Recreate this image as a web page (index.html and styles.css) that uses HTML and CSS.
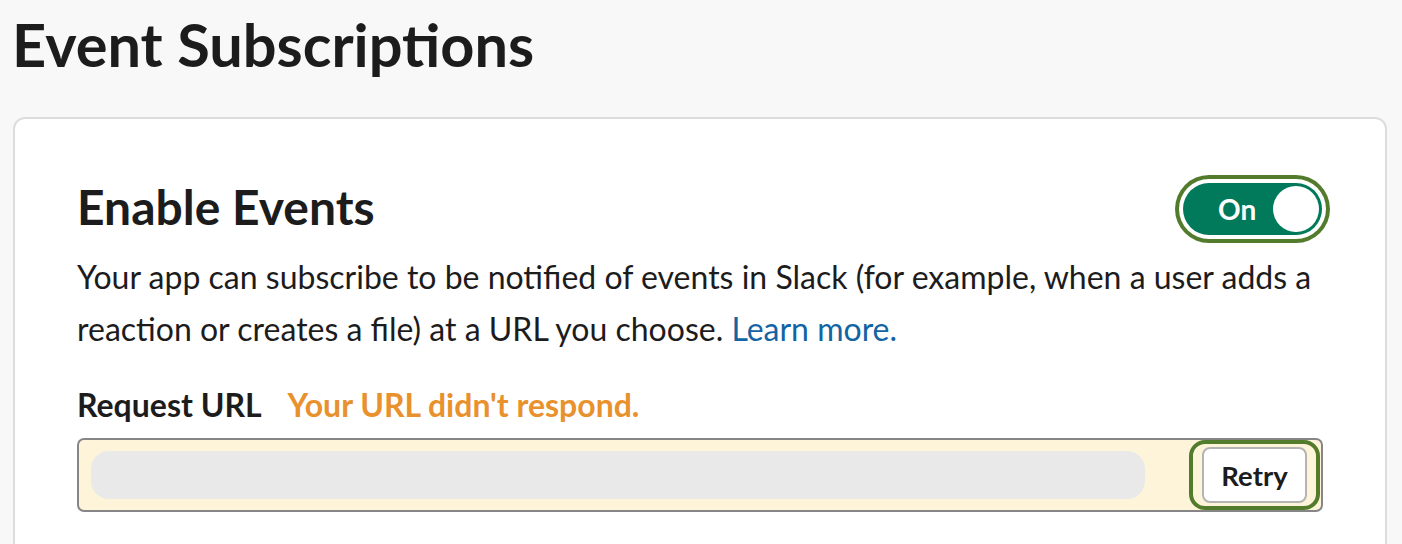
FILE: index.html
```html
<!DOCTYPE html>
<html lang="en">
<head>
<meta charset="utf-8">
<title>Event Subscriptions</title>
<link rel="stylesheet" href="styles.css">
</head>
<body>
<div class="page">
  <h1 class="page-title">Event Subscriptions</h1>
  <section class="card">
    <div class="card-head">
      <h2 class="card-title">Enable Events</h2>
      <div class="toggle" role="switch" aria-checked="true">
        <span class="toggle-label">On</span>
        <span class="toggle-knob"></span>
      </div>
    </div>
    <p class="desc">Your app can subscribe to be notified of events in Slack (for example, when a user adds a reaction or creates a file) at a URL you choose. <a class="link" href="#">Learn more.</a></p>
    <div class="field-label">
      <span class="label">Request URL</span>
      <span class="warn">Your URL didn't respond.</span>
    </div>
    <div class="url-input">
      <div class="url-placeholder"></div>
      <div class="retry-ring">
        <button class="retry">Retry</button>
      </div>
    </div>
  </section>
</div>
</body>
</html>
```

FILE: styles.css
```css
* { box-sizing: border-box; }
html, body {
  margin: 0;
  padding: 0;
  background: #f8f8f8;
  font-family: "Lato", "Noto Sans", sans-serif;
  color: #1d1c1d;
  overflow: hidden;
}
.page {
  padding: 0 15px 0 13px;
}
.page-title {
  margin: 6px 0 34px -1px;
  font-size: 59.5px;
  line-height: 77px;
  font-weight: 700;
}
.card {
  background: #fff;
  border: 2px solid #dddddd;
  border-radius: 12px;
  padding: 64px 62px 80px 62px;
}
.card-head {
  display: flex;
  justify-content: space-between;
  align-items: flex-start;
}
.card-title {
  margin: -2px 0 0 0;
  font-size: 48px;
  line-height: 52px;
  font-weight: 700;
}
.toggle {
  display: flex;
  align-items: center;
  width: 139px;
  height: 52px;
  border-radius: 26px;
  background: #007a5a;
  padding: 0 3px 0 35px;
  gap: 17px;
  margin-right: 1px;
  box-shadow: 0 0 0 4px #fff, 0 0 0 8px #537b2c;
}
.toggle-label {
  color: #fff;
  font-size: 28px;
  font-weight: 700;
  line-height: 1;
}
.toggle-knob {
  width: 46px;
  height: 46px;
  border-radius: 50%;
  background: #fff;
  margin-left: auto;
}
.desc {
  margin: 16px 0 0 0;
  font-size: 32px;
  line-height: 52px;
}
.link {
  color: #1264a3;
  text-decoration: none;
}
.field-label {
  margin-top: 30px;
  font-size: 32px;
  line-height: 40px;
  font-weight: 700;
  display: flex;
}
.warn {
  color: #e8912d;
  margin-left: 26px;
}
.url-input {
  margin-top: 13px;
  display: flex;
  align-items: center;
  height: 74px;
  border: 2px solid #868686;
  border-radius: 7px;
  background: #fef4da;
  padding: 0 1px 0 12px;
}
.url-placeholder {
  flex: 1;
  height: 48px;
  border-radius: 18px;
  background: #e9e9e9;
  margin-right: 44px;
}
.retry-ring {
  border: 4px solid #537b2c;
  border-radius: 16px;
  padding: 3px 9px;
  height: 70px;
  display: flex;
  align-items: center;
}
.retry {
  width: 105px;
  height: 56px;
  background: #fff;
  border: 2px solid #b4b4b4;
  border-radius: 8px;
  font-family: "Lato", "Noto Sans", sans-serif;
  font-size: 27.5px;
  font-weight: 700;
  color: #1d1c1d;
  padding: 0;
}
```
